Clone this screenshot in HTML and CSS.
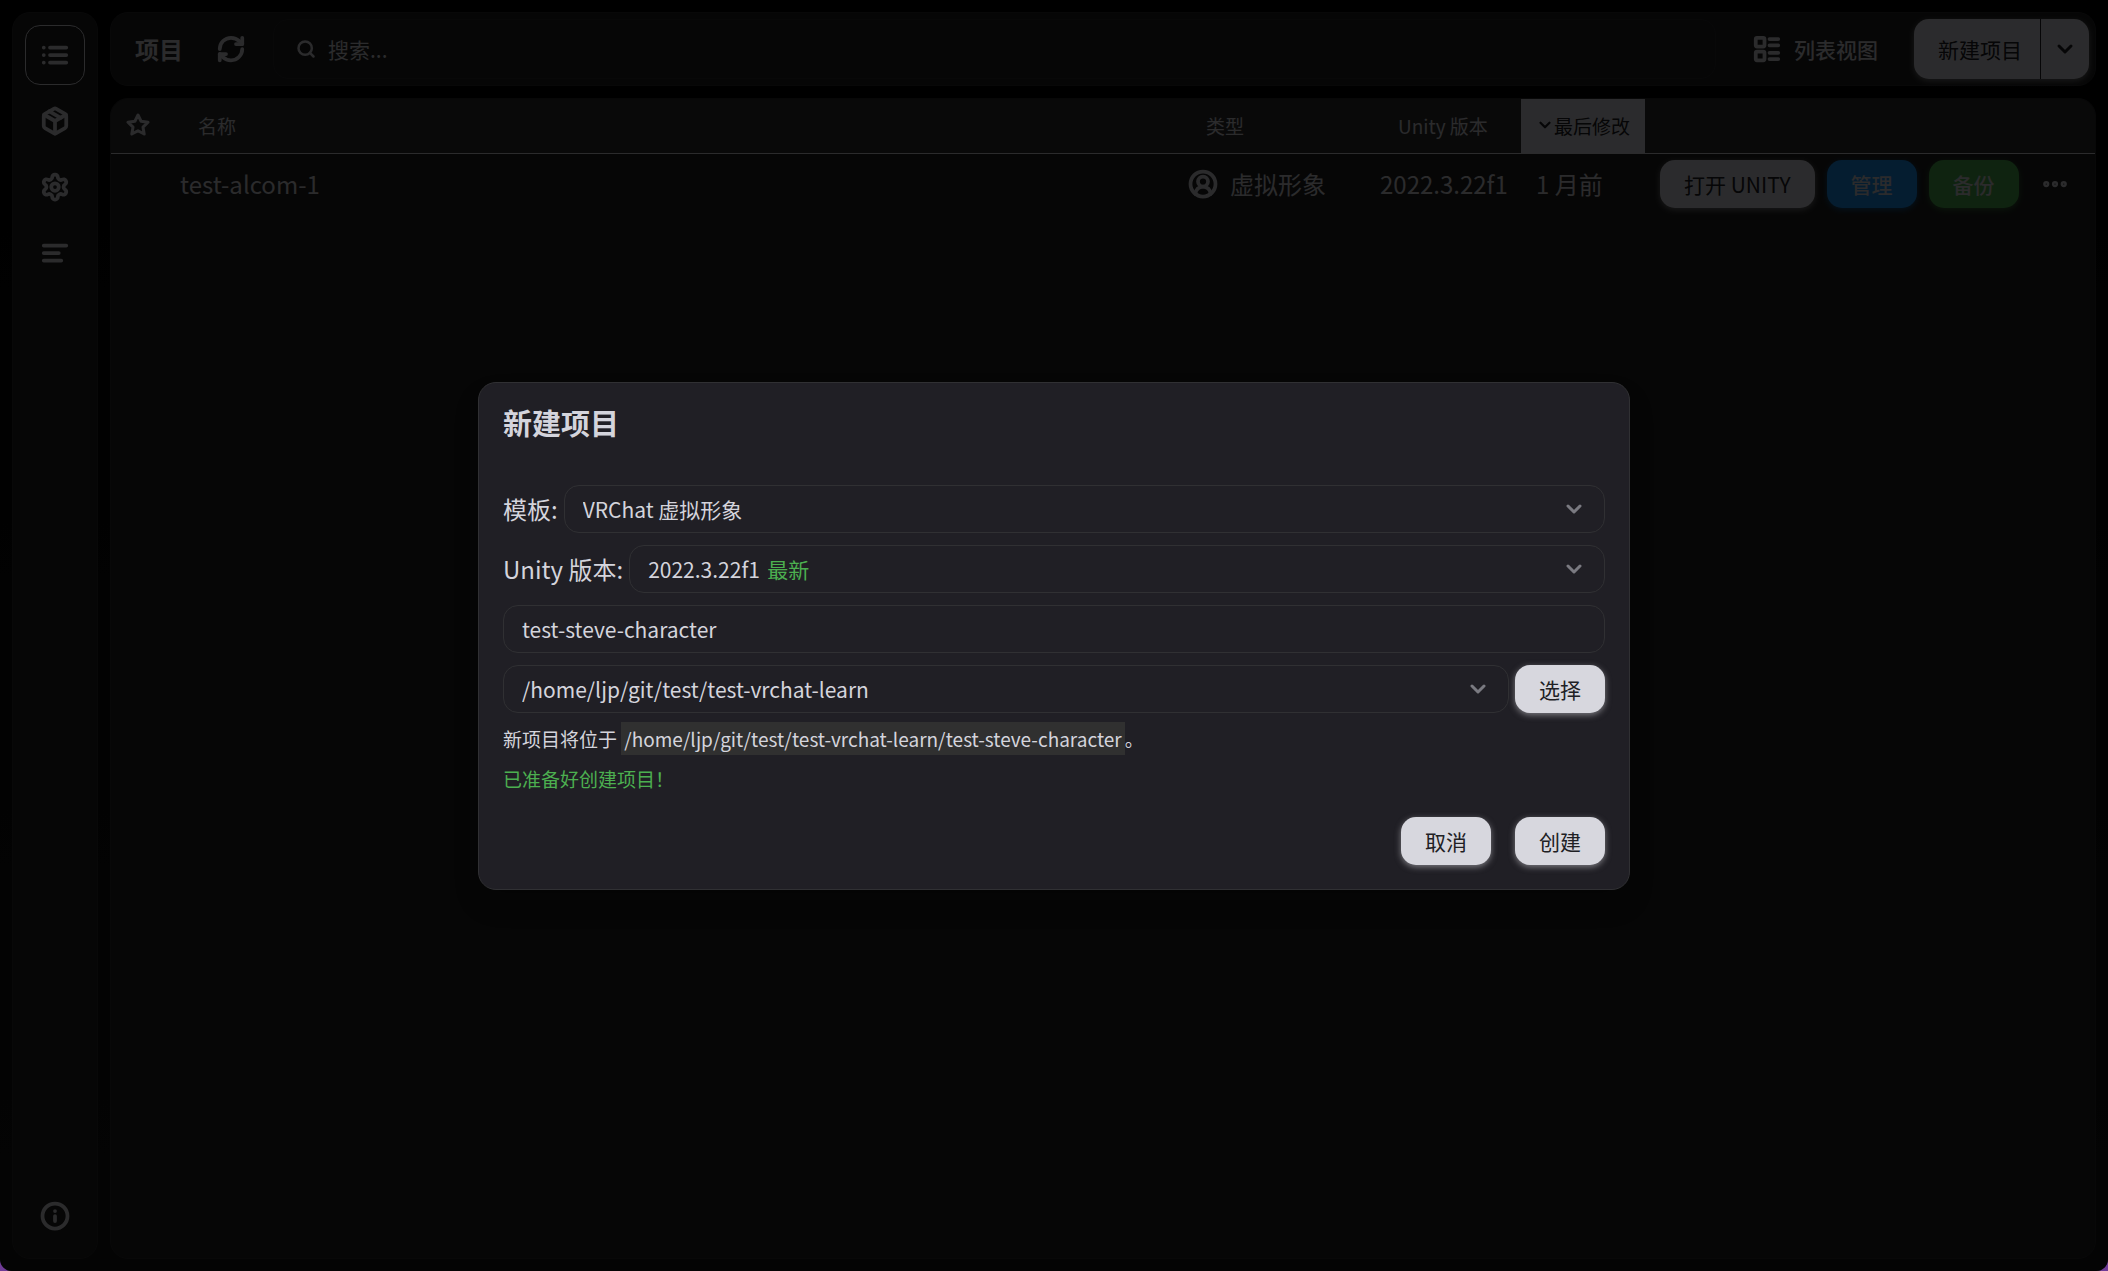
FILE: index.html
```html
<!DOCTYPE html>
<html lang="zh-CN">

<head>
  <meta charset="UTF-8">
  <meta name="viewport" content="width=device-width, initial-scale=1.0">
  <title>项目</title>
  <link rel="stylesheet" href="styles.css">
</head>

<body>
  <div class="app">
    <nav class="sidebar card">
      <a href="#projects" class="nav-item active" aria-label="项目">
        <svg class="icon" viewBox="0 0 24 24"><path d="M3 6h.01M3 12h.01M3 18h.01M8 6h13M8 12h13M8 18h13"/></svg>
      </a>
      <a href="#packages" class="nav-item" aria-label="软件包">
        <svg class="icon" viewBox="0 0 24 24"><path d="m7.5 4.27 9 5.15"/><path d="M21 8a2 2 0 0 0-1-1.73l-7-4a2 2 0 0 0-2 0l-7 4A2 2 0 0 0 3 8v8a2 2 0 0 0 1 1.73l7 4a2 2 0 0 0 2 0l7-4A2 2 0 0 0 21 16Z"/><path d="m3.3 7 8.7 5 8.7-5M12 22V12"/></svg>
      </a>
      <a href="#settings" class="nav-item" aria-label="设置">
        <svg class="icon" viewBox="0 0 24 24"><path d="M12.22 2h-.44a2 2 0 0 0-2 2v.18a2 2 0 0 1-1 1.73l-.43.25a2 2 0 0 1-2 0l-.15-.08a2 2 0 0 0-2.73.73l-.22.38a2 2 0 0 0 .73 2.73l.15.1a2 2 0 0 1 1 1.72v.51a2 2 0 0 1-1 1.74l-.15.09a2 2 0 0 0-.73 2.73l.22.38a2 2 0 0 0 2.73.73l.15-.08a2 2 0 0 1 2 0l.43.25a2 2 0 0 1 1 1.73V20a2 2 0 0 0 2 2h.44a2 2 0 0 0 2-2v-.18a2 2 0 0 1 1-1.73l.43-.25a2 2 0 0 1 2 0l.15.08a2 2 0 0 0 2.73-.73l.22-.39a2 2 0 0 0-.73-2.73l-.15-.08a2 2 0 0 1-1-1.74v-.5a2 2 0 0 1 1-1.74l.15-.09a2 2 0 0 0 .73-2.73l-.22-.38a2 2 0 0 0-2.73-.73l-.15.08a2 2 0 0 1-2 0l-.43-.25a2 2 0 0 1-1-1.73V4a2 2 0 0 0-2-2z"/><circle cx="12" cy="12" r="3"/></svg>
      </a>
      <a href="#log" class="nav-item" aria-label="日志">
        <svg class="icon" viewBox="0 0 24 24"><path d="M21 6H3M15 12H3M17 18H3"/></svg>
      </a>
      <a href="#about" class="nav-item bottom" aria-label="关于">
        <svg class="icon" viewBox="0 0 24 24"><circle cx="12" cy="12" r="10"/><path d="M12 16v-4M12 8h.01"/></svg>
      </a>
    </nav>

    <main class="content">
      <header class="toolbar card">
        <h1>项目</h1>
        <button class="icon-button" aria-label="刷新">
          <svg class="icon" viewBox="0 0 24 24"><path d="M3 12a9 9 0 0 1 9-9 9.75 9.75 0 0 1 6.74 2.74L21 8"/><path d="M21 3v5h-5"/><path d="M21 12a9 9 0 0 1-9 9 9.75 9.75 0 0 1-6.74-2.74L3 16"/><path d="M8 16H3v5"/></svg>
        </button>
        <div class="search">
          <svg class="icon search-icon" viewBox="0 0 24 24"><circle cx="11" cy="11" r="8"/><path d="m21 21-4.3-4.3"/></svg>
          <input type="text" placeholder="搜索..." aria-label="搜索">
        </div>
        <button class="view-button">
          <svg class="icon" viewBox="0 0 24 24"><rect width="7" height="7" x="3" y="3" rx="1"/><rect width="7" height="7" x="3" y="14" rx="1"/><path d="M14 4h7M14 9h7M14 15h7M14 20h7"/></svg>
          列表视图
        </button>
        <div class="split-button">
          <button class="split-main">新建项目</button>
          <button class="split-more" aria-label="更多">
            <svg class="icon medium" viewBox="0 0 24 24"><path d="m6 9 6 6 6-6"/></svg>
          </button>
        </div>
      </header>

      <section class="projects card">
        <table>
          <thead>
            <tr>
              <th class="col-star">
                <svg class="icon medium" viewBox="0 0 24 24"><path d="M12 2l3.09 6.26L22 9.27l-5 4.87 1.18 6.88L12 17.77l-6.18 3.25L7 14.14 2 9.27l6.91-1.01L12 2z"/></svg>
              </th>
              <th class="sortable">名称</th>
              <th class="sortable col-type">类型</th>
              <th class="sortable col-unity">Unity 版本</th>
              <th class="sorted col-date"><svg class="icon small" viewBox="0 0 24 24"><path d="m6 9 6 6 6-6"/></svg>最后修改</th>
              <th class="col-actions"></th>
            </tr>
          </thead>
          <tbody>
            <tr>
              <td></td>
              <td>test-alcom-1</td>
              <td>
                <div class="type">
                  <svg class="icon" viewBox="0 0 24 24"><path d="M18 20a6 6 0 0 0-12 0"/><circle cx="12" cy="10" r="4"/><circle cx="12" cy="12" r="10"/></svg>
                  虚拟形象
                </div>
              </td>
              <td>2022.3.22f1</td>
              <td>1 月前</td>
              <td>
                <div class="actions">
                  <button class="btn">打开 UNITY</button>
                  <button class="btn blue">管理</button>
                  <button class="btn green">备份</button>
                  <button class="more" aria-label="更多操作">
                    <svg class="icon dots" viewBox="0 0 24 24"><circle cx="5" cy="12" r="1.5"/><circle cx="12" cy="12" r="1.5"/><circle cx="19" cy="12" r="1.5"/></svg>
                  </button>
                </div>
              </td>
            </tr>
          </tbody>
        </table>
      </section>
    </main>

    <div class="overlay">
      <form class="dialog" role="dialog" aria-labelledby="dialogTitle">
        <h2 id="dialogTitle">新建项目</h2>
        <div class="field">
          <label for="template">模板:</label>
          <div class="select">
            <select id="template">
              <option>VRChat 虚拟形象</option>
            </select>
            <svg class="icon medium" viewBox="0 0 24 24"><path d="m6 9 6 6 6-6"/></svg>
          </div>
        </div>
        <div class="field">
          <label for="unity">Unity 版本:</label>
          <div class="select">
            <select id="unity">
              <option>2022.3.22f1</option>
            </select>
            <span class="latest">最新</span>
            <svg class="icon medium" viewBox="0 0 24 24"><path d="m6 9 6 6 6-6"/></svg>
          </div>
        </div>
        <div class="field">
          <input type="text" value="test-steve-character" aria-label="项目名称">
        </div>
        <div class="field">
          <div class="select">
            <select aria-label="项目位置">
              <option>/home/ljp/git/test/test-vrchat-learn</option>
            </select>
            <svg class="icon medium" viewBox="0 0 24 24"><path d="m6 9 6 6 6-6"/></svg>
          </div>
          <button type="button" class="btn">选择</button>
        </div>
        <p>新项目将位于 <span class="path">/home/ljp/git/test/test-vrchat-learn/test-steve-character</span>。</p>
        <p class="ready">已准备好创建项目！</p>
        <div class="dialog-footer">
          <button type="button" class="btn">取消</button>
          <button type="button" class="btn">创建</button>
        </div>
      </form>
    </div>
  </div>
</body>

</html>
```
FILE: styles.css
```css
* {
  box-sizing: border-box;
}

html {
  background-color: #6f3b96;
}

body {
  margin: 0;
  color: #d4d4dc;
  font-family: "Noto Sans CJK SC", sans-serif;
  font-size: 24px;
}

button,
input,
select {
  font-family: inherit;
  font-size: 21px;
  color: inherit;
  background: none;
  border: none;
  outline: none;
  margin: 0;
  padding: 0;
}

button {
  cursor: pointer;
}

.icon {
  width: 30px;
  height: 30px;
  flex-shrink: 0;
  fill: none;
  stroke: currentColor;
  stroke-width: 3;
  stroke-linecap: round;
  stroke-linejoin: round;
}

.icon.medium {
  width: 24px;
  height: 24px;
}

.icon.small {
  width: 18px;
  height: 18px;
}

.icon.dots {
  stroke-width: 2;
}

/* Layout */
.app {
  position: relative;
  display: flex;
  gap: 12px;
  min-height: 100vh;
  padding: 12px;
  background: linear-gradient(#000, #161616);
  border-radius: 0 0 12px 12px;
  overflow: hidden;
}

.card {
  background-color: #1f1f1f;
  border: 1px solid #2a2a2c;
  border-radius: 18px;
}

.sidebar {
  display: flex;
  flex-direction: column;
  gap: 6px;
  padding: 12px;
}

.nav-item {
  display: flex;
  align-items: center;
  justify-content: center;
  width: 60px;
  height: 60px;
  color: inherit;
  border-radius: 15px;
}

.nav-item.active {
  border: 1px solid #d4d4dc;
}

.nav-item.bottom {
  margin-top: auto;
}

.content {
  flex: 1;
  display: flex;
  flex-direction: column;
  gap: 12px;
}

/* Toolbar */
.toolbar {
  display: flex;
  align-items: center;
  padding: 6px;
}

.toolbar h1 {
  margin: 0 18px;
  font-size: 24px;
  line-height: 36px;
}

.icon-button {
  display: flex;
  padding: 15px;
  margin-right: 12px;
}

.search {
  flex: 1;
  display: flex;
  align-items: center;
  gap: 12px;
  height: 60px;
  padding: 0 22px;
  border: 1px solid #2a2a2c;
  border-radius: 15px;
}

.search-icon {
  width: 20px;
  height: 20px;
}

.search input {
  flex: 1;
}

.search input::placeholder {
  color: inherit;
  opacity: 1;
}

.view-button {
  display: flex;
  align-items: center;
  gap: 12px;
  padding: 0 36px;
  font-weight: 500;
}

.split-button {
  display: flex;
  height: 60px;
  color: #202024;
  background-color: #d7d7de;
  border-radius: 15px;
  box-shadow: 0 2px 6px rgba(215, 215, 222, 0.5);
}

.split-main {
  padding: 0 18px 0 24px;
}

.split-more {
  display: flex;
  align-items: center;
  padding: 0 12px;
  border-left: 1px solid #202024;
}

/* Projects table */
.projects {
  flex: 1;
  overflow: hidden;
}

table {
  width: 100%;
  border-collapse: separate;
  border-spacing: 0;
  table-layout: fixed;
}

th {
  height: 55px;
  padding: 0 15px 2px;
  font-size: 19px;
  font-weight: normal;
  text-align: left;
  white-space: nowrap;
  background-color: #303030;
  border-bottom: 1px solid #d4d4dc;
}

th.sortable {
  padding-left: 33px;
}

th.sorted {
  color: #202024;
  background-color: #d7d7de;
}

.col-star {
  width: 54px;
}

.col-star .icon {
  display: block;
}

.col-type {
  width: 192px;
}

.col-unity {
  width: 156px;
}

.col-date {
  width: 124px;
}

.col-actions {
  width: 450px;
}

td {
  padding: 6px 15px;
  line-height: 36px;
  white-space: nowrap;
}

.type {
  display: flex;
  align-items: center;
  gap: 12px;
}

.actions {
  display: flex;
  gap: 12px;
}

.btn {
  height: 48px;
  padding: 0 24px;
  color: #202024;
  background-color: #d7d7de;
  border-radius: 15px;
  white-space: nowrap;
  box-shadow: 0 2px 6px rgba(215, 215, 222, 0.5);
}

.btn.blue {
  color: #d4d4dc;
  font-weight: 500;
  background-color: #1a8ff0;
  box-shadow: 0 2px 6px rgba(26, 143, 240, 0.5);
}

.btn.green {
  color: #d4d4dc;
  font-weight: 500;
  background-color: #4caf50;
  box-shadow: 0 2px 6px rgba(76, 175, 80, 0.5);
}

.more {
  display: flex;
  align-items: center;
  padding: 0 9px;
}

/* Dialog */
.overlay {
  position: absolute;
  inset: 0;
  display: flex;
  align-items: center;
  justify-content: center;
  background-color: rgba(0, 0, 0, 0.8);
}

.dialog {
  display: flex;
  flex-direction: column;
  gap: 12px;
  width: 100%;
  max-width: 1152px;
  padding: 24px;
  background-color: #201f25;
  border: 1px solid #303033;
  border-radius: 18px;
  box-shadow: 0 15px 24px rgba(0, 0, 0, 0.2);
}

.dialog h2 {
  margin: 0 0 36px;
  font-size: 29px;
  line-height: 30px;
}

.field {
  display: flex;
  align-items: center;
  gap: 6px;
}

.field label {
  line-height: 36px;
}

.field input,
.field select {
  display: block;
  width: 100%;
  height: 48px;
  padding: 0 18px;
  border: 1px solid #303033;
  border-radius: 15px;
  appearance: none;
}

.select {
  position: relative;
  flex: 1;
}

.select .icon {
  position: absolute;
  right: 19px;
  top: 12px;
  opacity: 0.5;
  pointer-events: none;
}

/* Sits right after the version number */
.latest {
  position: absolute;
  left: 138px;
  top: 9px;
  font-size: 21px;
  line-height: 30px;
  color: #4caf50;
  pointer-events: none;
}

.dialog p {
  margin: 0;
  font-size: 19px;
  line-height: 28px;
}

.path {
  padding: 3px;
  background-color: #303030;
}

.dialog .ready {
  color: #4caf50;
}

.dialog-footer {
  display: flex;
  justify-content: flex-end;
  gap: 24px;
  margin-top: 12px;
}
```
